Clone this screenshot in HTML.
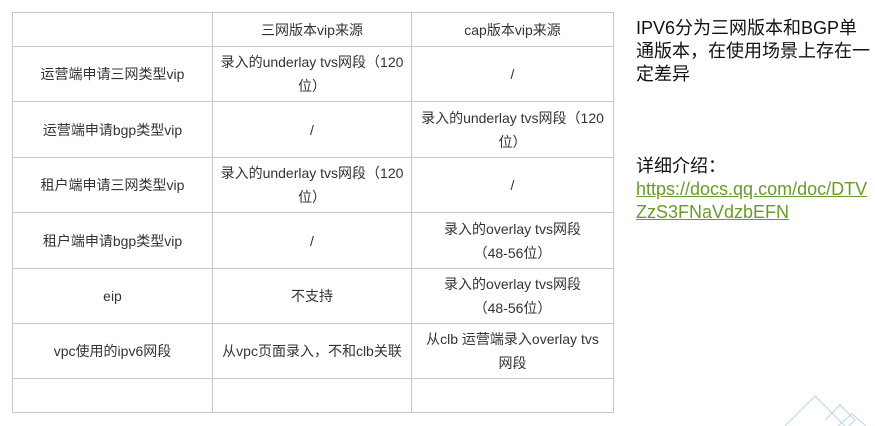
<!DOCTYPE html>
<html><head><meta charset="utf-8"><style>
body{margin:0;width:875px;height:426px;background:#fff;position:relative;overflow:hidden;font-family:"Liberation Sans","Noto Sans CJK SC",sans-serif}
table{position:absolute;left:12px;top:12px;border-collapse:collapse;font-size:14px;color:#333;table-layout:fixed;width:601px}
td{border:1px solid #c8c8c8;text-align:center;vertical-align:middle;padding:0 2px;line-height:24px;white-space:nowrap;overflow:hidden}
.r{position:absolute;left:636px;top:17px;font-size:18px;line-height:23px;color:#111;white-space:nowrap}
a{color:#6b9a2b;text-decoration:underline}
</style></head><body>
<table>
<colgroup><col style="width:200px"><col style="width:199px"><col style="width:202px"></colgroup>
<tr style="height:34px"><td></td><td>三网版本vip来源</td><td>cap版本vip来源</td></tr>
<tr style="height:55px"><td>运营端申请三网类型vip</td><td>录入的underlay tvs网段（120<br>位）</td><td>/</td></tr>
<tr style="height:56px"><td>运营端申请bgp类型vip</td><td>/</td><td>录入的underlay tvs网段（120<br>位）</td></tr>
<tr style="height:55px"><td>租户端申请三网类型vip</td><td>录入的underlay tvs网段（120<br>位）</td><td>/</td></tr>
<tr style="height:56px"><td>租户端申请bgp类型vip</td><td>/</td><td>录入的overlay tvs网段<br>（48-56位）</td></tr>
<tr style="height:55px"><td>eip</td><td>不支持</td><td>录入的overlay tvs网段<br>（48-56位）</td></tr>
<tr style="height:55px"><td>vpc使用的ipv6网段</td><td>从vpc页面录入，不和clb关联</td><td>从clb 运营端录入overlay tvs<br>网段</td></tr>
<tr style="height:34px"><td></td><td></td><td></td></tr>
</table>
<div class="r">IPV6分为三网版本和BGP单<br>通版本，在使用场景上存在一<br>定差异<br><br><br><br>详细介绍：<br><a>https://docs.qq.com/doc/DTV</a><br><a>ZzS3FNaVdzbEFN</a></div>
<svg style="position:absolute;left:780px;top:390px" width="95" height="36"><g fill="none" stroke="#b9d3ea" stroke-width="1"><path d="M5 36 L35 6 L65 36"/><path d="M45 30 L60 15 L75 30 L60 45"/><path d="M58 36 L72 24 L86 36"/></g></svg>
</body></html>
